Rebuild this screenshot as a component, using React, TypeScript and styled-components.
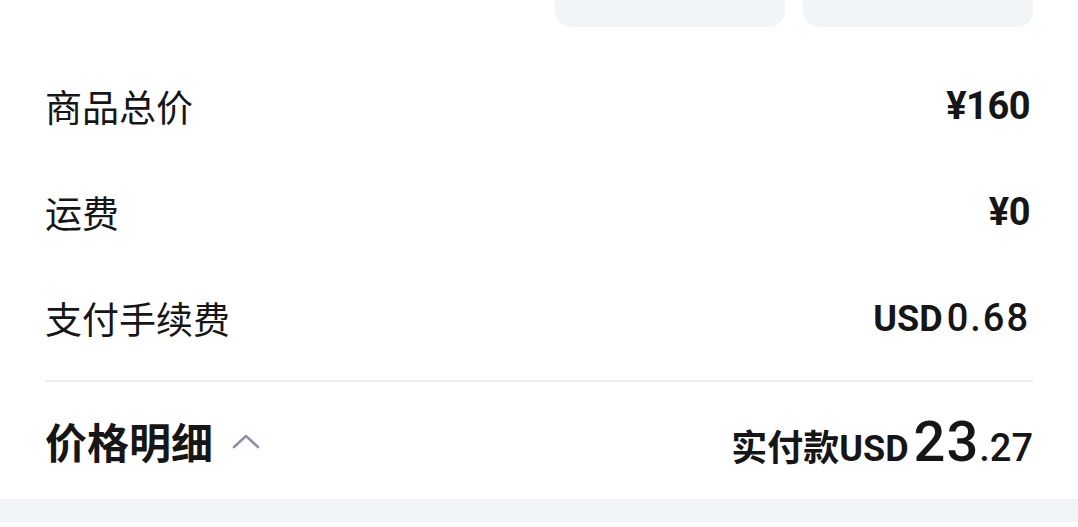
import React from 'react';
import styled, { createGlobalStyle } from 'styled-components';

const GlobalStyle = createGlobalStyle`
  html, body {
    margin: 0;
    padding: 0;
    background: #ffffff;
  }
  body {
    font-family: Roboto, "Noto Sans CJK SC", "Noto Sans", sans-serif;
    color: #161616;
  }
`;

const Page = styled.div`
  width: 1078px;
  height: 527px;
  overflow: hidden;
  display: flex;
  flex-direction: column;
`;

const Sheet = styled.div`
  padding: 0 45px;
  display: flex;
  flex-direction: column;
`;

const ActionBar = styled.div`
  display: flex;
  justify-content: flex-end;
  gap: 18px;
  margin-bottom: 26px;
`;

const ActionButton = styled.div`
  width: 230px;
  height: 27px;
  background: #f2f5f8;
  border-radius: 0 0 16px 16px;
`;

const Row = styled.div`
  height: 106px;
  display: flex;
  align-items: center;
  justify-content: space-between;
`;

const Label = styled.span`
  font-family: "Noto Sans CJK SC", sans-serif;
  font-size: 37px;
  font-weight: 400;
  color: #161616;
`;

const Amount = styled.span`
  font-family: Roboto, "Noto Sans CJK SC", sans-serif;
  font-size: 38px;
  font-weight: 700;
  color: #161616;
  display: flex;
  align-items: baseline;
  margin-right: 3px;
`;

const Currency = styled.span`
  font-size: 36px;
  font-weight: 700;
  margin-right: 4px;
`;

const Figure = styled.span<{ $light?: boolean }>`
  font-weight: ${({ $light }) => ($light ? 500 : 700)};
  letter-spacing: ${({ $light }) => ($light ? '2px' : '-0.5px')};
`;

const Divider = styled.div`
  height: 2px;
  background: #eeeeee;
  margin-top: 9px;
`;

const Summary = styled.div`
  height: 117px;
  display: flex;
  align-items: center;
  justify-content: space-between;
`;

const Toggle = styled.div`
  display: flex;
  align-items: center;
  gap: 18px;
`;

const Title = styled.span`
  font-family: "Noto Sans CJK SC", sans-serif;
  font-size: 42px;
  font-weight: 700;
  color: #161616;
`;

const Total = styled.div`
  display: flex;
  align-items: baseline;
  font-weight: 700;
  color: #161616;
  margin-top: 2px;
`;

const TotalLabel = styled.span`
  font-family: "Noto Sans CJK SC", sans-serif;
  font-size: 36px;
  font-weight: 700;
`;

const TotalCurrency = styled.span`
  font-family: Roboto, sans-serif;
  font-size: 36px;
  font-weight: 700;
  margin-right: 5px;
`;

const TotalInt = styled.span`
  font-family: Roboto, sans-serif;
  font-size: 56px;
  font-weight: 500;
  letter-spacing: 1px;
`;

const TotalDec = styled.span`
  font-family: Roboto, sans-serif;
  font-size: 38px;
  font-weight: 500;
`;

const Band = styled.div`
  height: 23px;
  background: #f2f5f8;
`;

const Chevron = () => (
  <svg width="30" height="20" viewBox="0 0 30 20" fill="none">
    <path d="M3 16 L15 5 L27 16" stroke="#8a93a5" strokeWidth="2.6" strokeLinecap="round" strokeLinejoin="round" />
  </svg>
);

const rows = [
  { label: '商品总价', currency: '¥', value: '160' },
  { label: '运费', currency: '¥', value: '0' },
];

export default function App() {
  return (
    <Page>
      <GlobalStyle />
      <Sheet>
        <ActionBar>
          <ActionButton />
          <ActionButton />
        </ActionBar>
        {rows.map((r) => (
          <Row key={r.label}>
            <Label>{r.label}</Label>
            <Amount>
              <Figure>{r.currency}{r.value}</Figure>
            </Amount>
          </Row>
        ))}
        <Row>
          <Label>支付手续费</Label>
          <Amount>
            <Currency>USD</Currency>
            <Figure $light>0.68</Figure>
          </Amount>
        </Row>
        <Divider />
        <Summary>
          <Toggle>
            <Title>价格明细</Title>
            <Chevron />
          </Toggle>
          <Total>
            <TotalLabel>实付款</TotalLabel>
            <TotalCurrency>USD</TotalCurrency>
            <TotalInt>23</TotalInt>
            <TotalDec>.27</TotalDec>
          </Total>
        </Summary>
      </Sheet>
      <Band />
    </Page>
  );
}
